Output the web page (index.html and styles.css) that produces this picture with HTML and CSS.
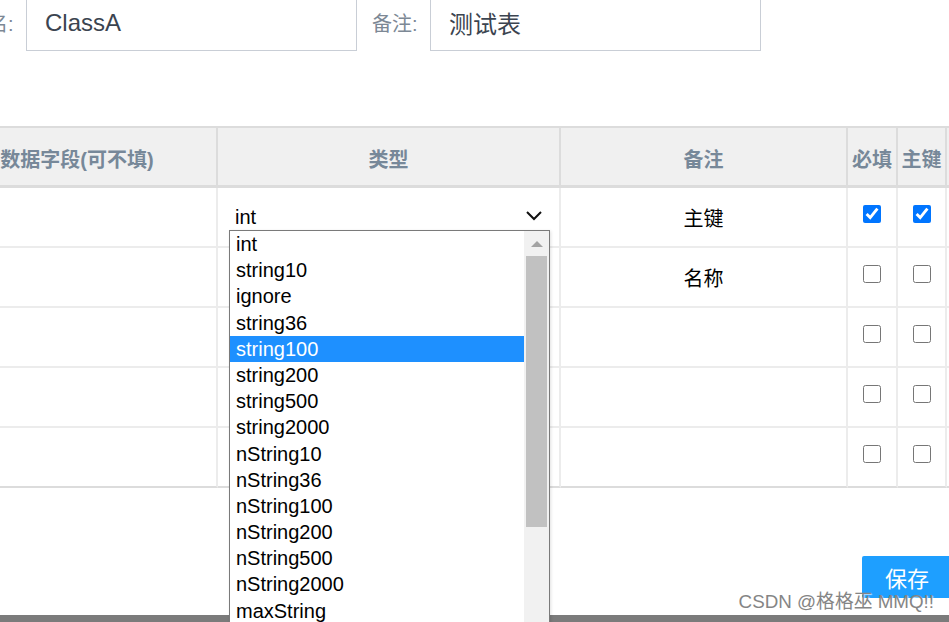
FILE: index.html
```html
<!DOCTYPE html>
<html lang="zh-CN">
<head>
<meta charset="utf-8">
<title>表结构</title>
<link rel="stylesheet" href="styles.css">
</head>
<body>
<div class="page">
  <div class="form-row">
    <label class="field"><span class="field-label">类名:</span><input class="field-input" value="ClassA"></label>
    <label class="field"><span class="field-label">备注:</span><input class="field-input" value="测试表"></label>
  </div>

  <div class="grid">
    <div class="tr head">
      <div class="th">数据字段(可不填)</div>
      <div class="th">类型</div>
      <div class="th">备注</div>
      <div class="th">必填</div>
      <div class="th">主键</div>
      <div class="th"></div>
    </div>
    <div class="tr">
      <div class="td"></div>
      <div class="td td-type">
        <div class="select-wrap">
          <select class="type-select"><option>int</option></select>
          <svg class="chevron" width="16" height="10" viewBox="0 0 16 10"><polyline points="1,1 8,8 15,1" fill="none" stroke="#111" stroke-width="2"/></svg>
          <div class="dropdown">
            <ul class="options">
              <li>int</li>
              <li>string10</li>
              <li>ignore</li>
              <li>string36</li>
              <li class="hover">string100</li>
              <li>string200</li>
              <li>string500</li>
              <li>string2000</li>
              <li>nString10</li>
              <li>nString36</li>
              <li>nString100</li>
              <li>nString200</li>
              <li>nString500</li>
              <li>nString2000</li>
              <li>maxString</li>
            </ul>
            <div class="scrollbar">
              <div class="scroll-up"></div>
              <div class="scroll-thumb"></div>
            </div>
          </div>
        </div>
      </div>
      <div class="td">主键</div>
      <div class="td"><input type="checkbox" class="chk" checked></div>
      <div class="td"><input type="checkbox" class="chk" checked></div>
      <div class="td"></div>
    </div>
    <div class="tr">
      <div class="td"></div>
      <div class="td td-type"></div>
      <div class="td">名称</div>
      <div class="td"><input type="checkbox" class="chk"></div>
      <div class="td"><input type="checkbox" class="chk"></div>
      <div class="td"></div>
    </div>
    <div class="tr">
      <div class="td"></div>
      <div class="td td-type"></div>
      <div class="td"></div>
      <div class="td"><input type="checkbox" class="chk"></div>
      <div class="td"><input type="checkbox" class="chk"></div>
      <div class="td"></div>
    </div>
    <div class="tr">
      <div class="td"></div>
      <div class="td td-type"></div>
      <div class="td"></div>
      <div class="td"><input type="checkbox" class="chk"></div>
      <div class="td"><input type="checkbox" class="chk"></div>
      <div class="td"></div>
    </div>
    <div class="tr">
      <div class="td"></div>
      <div class="td td-type"></div>
      <div class="td"></div>
      <div class="td"><input type="checkbox" class="chk"></div>
      <div class="td"><input type="checkbox" class="chk"></div>
      <div class="td"></div>
    </div>
  </div>

  <div class="actions"><button class="btn-save">保存</button></div>
  <div class="bottom-bar"></div>
</div>
<div class="watermark">CSDN @格格巫 MMQ!!</div>
</body>
</html>
```

FILE: styles.css
```css
html, body {
  margin: 0;
  padding: 0;
  overflow: hidden;
  background: #fff;
}
body {
  font-family: "Liberation Sans", "Noto Sans CJK SC", sans-serif;
  color: #000;
}
.page {
  margin-left: -62px;
  margin-top: -6px;
}

/* top form */
.form-row {
  display: flex;
  gap: 15px;
  padding-left: 30px;
}
.field {
  display: flex;
  align-items: center;
}
.field-label {
  width: 46px;
  margin-right: 12px;
  font-size: 20px;
  color: #7d8895;
  white-space: nowrap;
}
.field-input {
  box-sizing: border-box;
  width: 331px;
  height: 57px;
  border: 1px solid #c9ced6;
  padding: 0 18px;
  font-family: "Liberation Sans", "Noto Sans CJK SC", sans-serif;
  font-size: 24px;
  color: #3b4450;
  outline: none;
  background: #fff;
}

/* table */
.grid {
  margin-top: 75px;
  display: grid;
  grid-template-columns: 280px 343px 287px 50px 49px 90px;
  border-top: 2px solid #dcdcdc;
  width: max-content;
}
.tr {
  display: contents;
}
.th, .td {
  box-sizing: border-box;
  height: 60px;
  display: flex;
  align-items: center;
  justify-content: center;
  white-space: nowrap;
  overflow: hidden;
}
.th {
  background: #f0f0f0;
  border-right: 2px solid #dcdcdc;
  border-bottom: 3px solid #dcdcdc;
  font-size: 20px;
  font-weight: bold;
  color: #778899;
  padding-top: 3px;
}
.td {
  border-right: 2px solid #ececec;
  border-bottom: 2px solid #ececec;
  font-size: 20px;
  color: #000;
}
.tr:last-child .td {
  border-bottom-color: #dcdcdc;
}
.td-type {
  justify-content: flex-start;
  overflow: visible;
}

/* select */
.select-wrap {
  position: relative;
  margin-left: 11px;
  width: 321px;
  height: 26px;
}
.type-select {
  appearance: none;
  -webkit-appearance: none;
  border: none;
  background: transparent;
  width: 100%;
  height: 26px;
  padding: 0 0 0 6px;
  margin: 0;
  font-family: "Liberation Sans", "Noto Sans CJK SC", sans-serif;
  font-size: 20px;
  color: #000;
  outline: none;
}
.chevron {
  position: absolute;
  left: 297px;
  top: 7px;
  pointer-events: none;
}

/* open dropdown list */
.dropdown {
  position: absolute;
  z-index: 10;
  top: 100%;
  left: 0;
  box-sizing: border-box;
  width: 321px;
  height: 400px;
  border: 1px solid #7a7a7a;
  background: #fff;
  display: flex;
  overflow: hidden;
  box-shadow: 1px 1px 3px rgba(0, 0, 0, 0.12);
}
.options {
  list-style: none;
  margin: 0;
  padding: 0;
  width: 294px;
  flex: none;
}
.options li {
  height: 26.2px;
  line-height: 26.2px;
  padding-left: 6px;
  font-size: 20px;
  color: #000;
}
.options li.hover {
  background: #1e90ff;
  color: #fff;
}
.scrollbar {
  flex: 1;
  background: #f1f1f1;
  display: flex;
  flex-direction: column;
}
.scroll-up {
  width: 0;
  height: 0;
  margin: 10px 0 0 7px;
  border-left: 6px solid transparent;
  border-right: 6px solid transparent;
  border-bottom: 6px solid #a3a3a3;
}
.scroll-thumb {
  margin: 9px 0 0 2px;
  width: 21px;
  height: 271px;
  background: #c1c1c1;
}

/* checkboxes */
.chk {
  width: 18px;
  height: 18px;
  margin: 0 0 6px 0;
}

/* actions */
.actions {
  display: flex;
  margin-top: 68px;
  padding-left: 924px;
}
.btn-save {
  height: 42px;
  padding: 0 23px;
  border: none;
  border-radius: 2px;
  background: #1e9fff;
  color: #fff;
  font-family: "Liberation Sans", "Noto Sans CJK SC", sans-serif;
  font-size: 22px;
  white-space: nowrap;
}
.bottom-bar {
  margin-top: 17px;
  height: 30px;
  background: #7b7b7b;
}

.watermark {
  position: absolute;
  right: 15px;
  bottom: 11px;
  font-size: 18.8px;
  line-height: 18px;
  color: #858585;
  text-shadow: 1px 1px 1px rgba(255, 255, 255, 0.7);
  white-space: nowrap;
}
```
